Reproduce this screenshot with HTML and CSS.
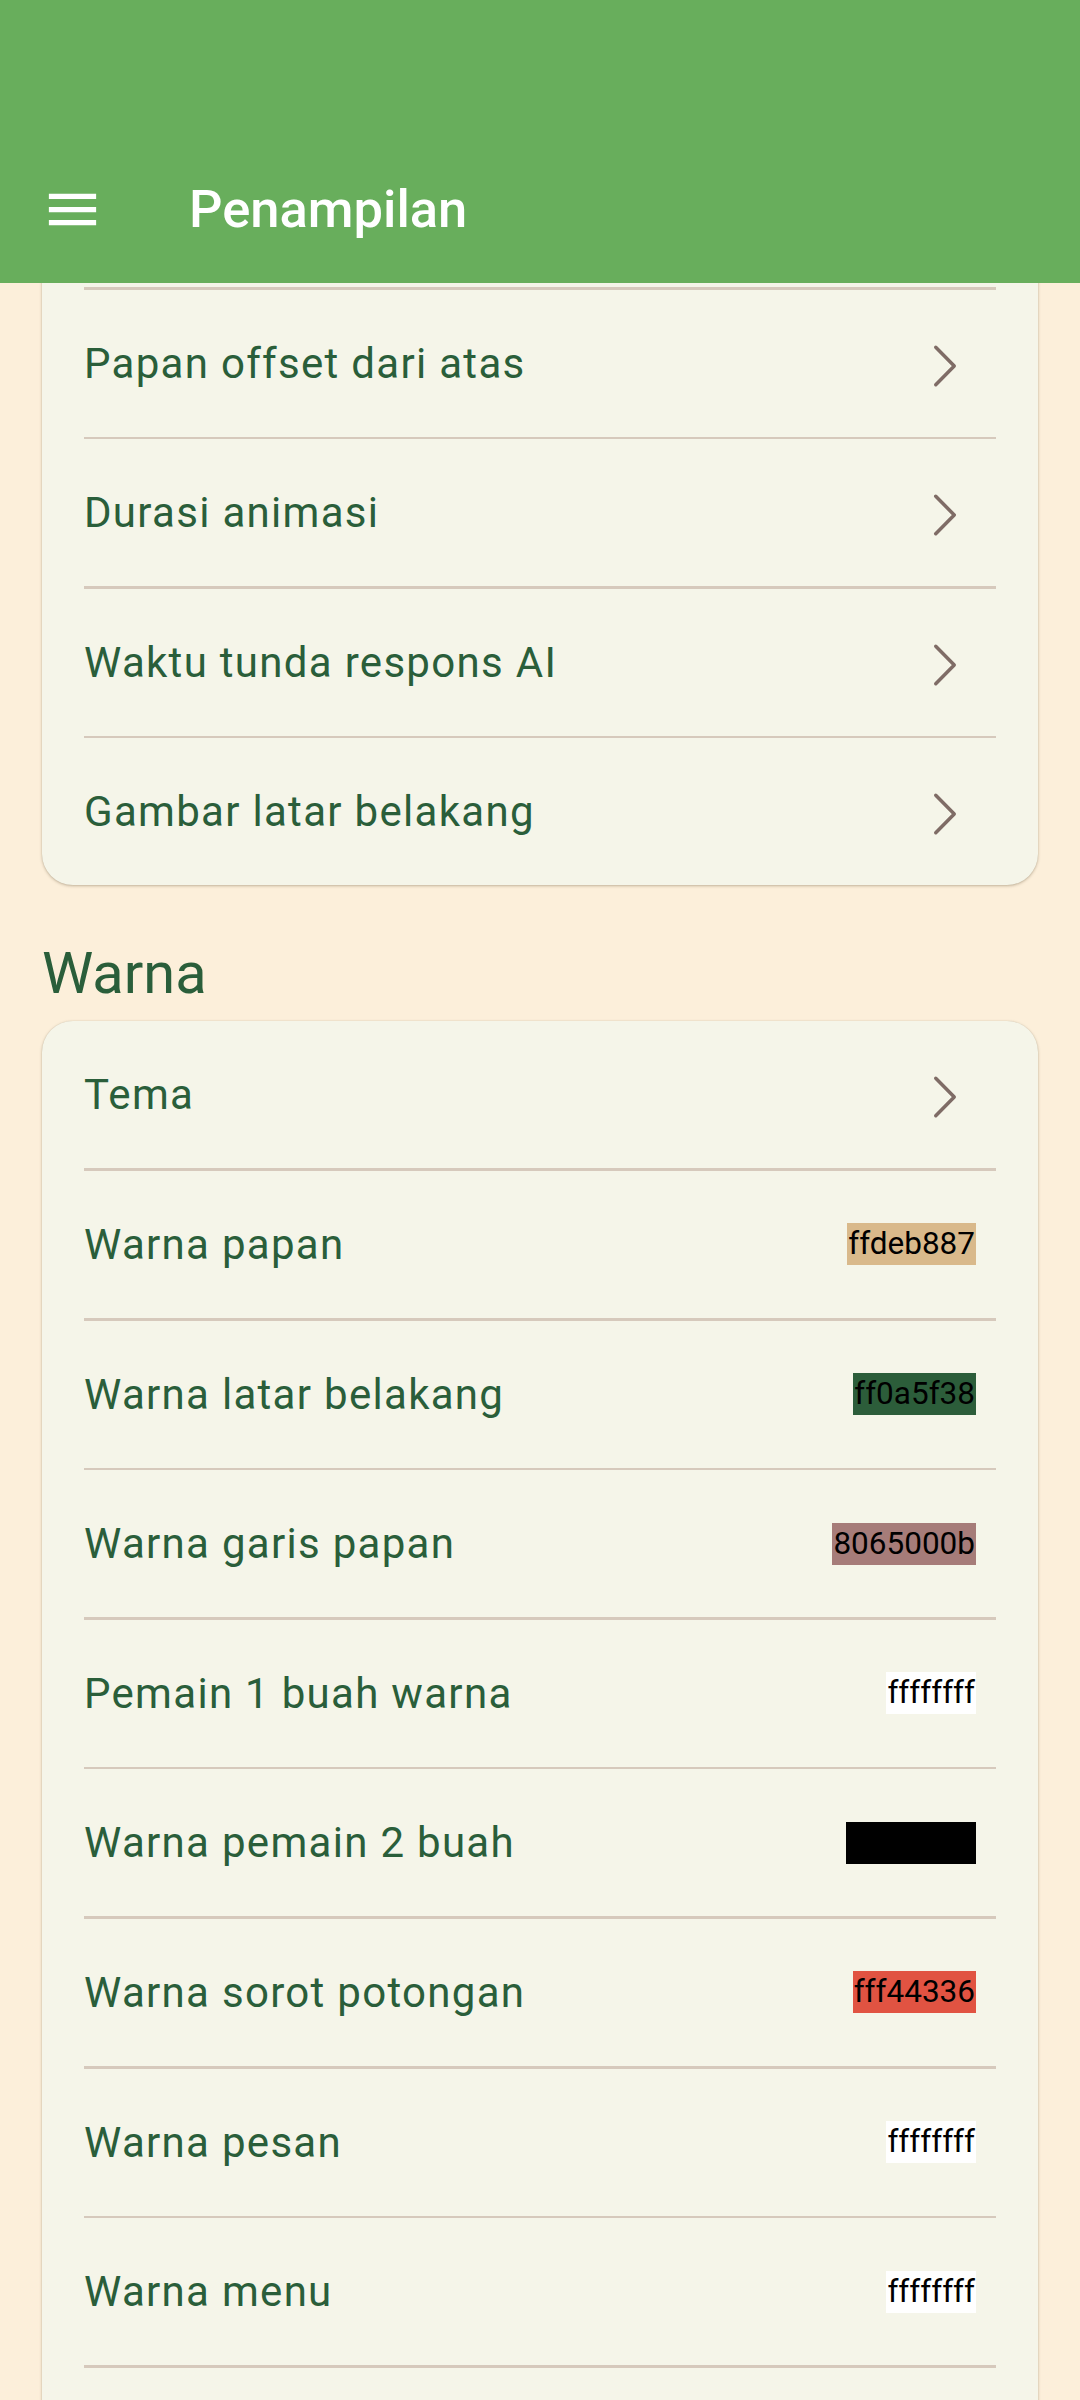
FILE: index.html
```html
<!DOCTYPE html>
<html lang="id">
<head>
<meta charset="utf-8">
<title>Penampilan</title>
<link rel="stylesheet" href="styles.css">
</head>
<body>
<div class="screen">
  <header class="appbar">
    <div class="toolbar">
      <svg class="menu-icon" viewBox="0 0 24 24" aria-hidden="true"><path d="M3 18h18v-2H3v2zm0-5h18v-2H3v2zm0-7v2h18V6H3z"/></svg>
      <h1 class="title">Penampilan</h1>
    </div>
  </header>
  <main class="content">
    <div class="scroll">
      <section class="card card-first">
        <div class="row row-ghost" aria-hidden="true"></div>
        <div class="divider"></div>
        <div class="row"><span class="label">Papan offset dari atas</span><svg class="chev" viewBox="0 0 63 63" aria-hidden="true"><path d="M2.75 15.25L21.25 34L2.75 52.75"/></svg></div>
        <div class="divider"></div>
        <div class="row"><span class="label">Durasi animasi</span><svg class="chev" viewBox="0 0 63 63" aria-hidden="true"><path d="M2.75 15.25L21.25 34L2.75 52.75"/></svg></div>
        <div class="divider"></div>
        <div class="row"><span class="label">Waktu tunda respons AI</span><svg class="chev" viewBox="0 0 63 63" aria-hidden="true"><path d="M2.75 15.25L21.25 34L2.75 52.75"/></svg></div>
        <div class="divider"></div>
        <div class="row"><span class="label">Gambar latar belakang</span><svg class="chev" viewBox="0 0 63 63" aria-hidden="true"><path d="M2.75 15.25L21.25 34L2.75 52.75"/></svg></div>
      </section>

      <h2 class="section-title">Warna</h2>

      <section class="card">
        <div class="row"><span class="label">Tema</span><svg class="chev" viewBox="0 0 63 63" aria-hidden="true"><path d="M2.75 15.25L21.25 34L2.75 52.75"/></svg></div>
        <div class="divider"></div>
        <div class="row"><span class="label">Warna papan</span><span class="swatch sw-board">ffdeb887</span></div>
        <div class="divider"></div>
        <div class="row"><span class="label">Warna latar belakang</span><span class="swatch sw-bg">ff0a5f38</span></div>
        <div class="divider"></div>
        <div class="row"><span class="label">Warna garis papan</span><span class="swatch sw-line">8065000b</span></div>
        <div class="divider"></div>
        <div class="row"><span class="label">Pemain 1 buah warna</span><span class="swatch sw-white">ffffffff</span></div>
        <div class="divider"></div>
        <div class="row"><span class="label">Warna pemain 2 buah</span><span class="swatch sw-black">ff000000</span></div>
        <div class="divider"></div>
        <div class="row"><span class="label">Warna sorot potongan</span><span class="swatch sw-red">fff44336</span></div>
        <div class="divider"></div>
        <div class="row"><span class="label">Warna pesan</span><span class="swatch sw-white">ffffffff</span></div>
        <div class="divider"></div>
        <div class="row"><span class="label">Warna menu</span><span class="swatch sw-white">ffffffff</span></div>
        <div class="divider"></div>
        <div class="row row-ghost" aria-hidden="true"></div>
      </section>
    </div>
  </main>
</div>
</body>
</html>
```
FILE: styles.css
```css
html, body {
  margin: 0;
  padding: 0;
}
body {
  width: 1080px;
  height: 2400px;
  overflow: hidden;
  background: #fcefda;
  font-family: Roboto, "Noto Sans", sans-serif;
}
.screen {
  width: 1080px;
  height: 2400px;
  display: flex;
  flex-direction: column;
  background: #fcefda;
}
.appbar {
  height: 283px;
  flex: none;
  background: #68ae5c;
  display: flex;
  align-items: flex-end;
}
.toolbar {
  height: 147px;
  width: 100%;
  display: flex;
  align-items: center;
  padding-left: 41px;
  box-sizing: border-box;
}
.menu-icon {
  width: 63px;
  height: 63px;
  fill: #ffffff;
  flex: none;
}
.title {
  margin: 0 0 0 85px;
  font-size: 52.5px;
  font-weight: 500;
  color: #ffffff;
  line-height: 1.2;
}
.content {
  flex: 1;
  overflow: hidden;
}
.scroll {
  display: flex;
  flex-direction: column;
}
.card {
  margin: 0 42px;
  background: #f5f5e9;
  border-radius: 31px;
  box-shadow: 0 1px 3px rgba(90, 70, 40, 0.35), 0 0 1px rgba(90, 70, 40, 0.2);
  overflow: hidden;
}
.card-first {
  margin-top: -143px;
}
.row {
  height: 147px;
  margin: 0 42px;
  display: flex;
  align-items: center;
  justify-content: space-between;
}
.divider {
  height: 2.6px;
  margin: 0 42px;
  background: #d6c9bc;
}
.label {
  font-size: 42px;
  color: #2a5e3a;
  letter-spacing: 1.3px;
}
.chev {
  width: 63px;
  height: 63px;
  flex: none;
  fill: none;
  stroke: #7f6c66;
  stroke-width: 3.5;
  stroke-linecap: round;
  stroke-linejoin: round;
}
.swatch {
  margin-right: 20px;
  font-size: 31.5px;
  line-height: 42px;
  padding: 0 1px;
  color: #000000;
}
.sw-board { background: #d9b98b; }
.sw-bg { background: #2c5d3a; }
.sw-line { background: #a67c79; }
.sw-white { background: #ffffff; }
.sw-black { background: #000000; }
.sw-red { background: #e15342; }
.section-title {
  margin: 53px 0 13px 42px;
  font-size: 57.75px;
  font-weight: 400;
  line-height: 70px;
  color: #2a5e3a;
}
```
